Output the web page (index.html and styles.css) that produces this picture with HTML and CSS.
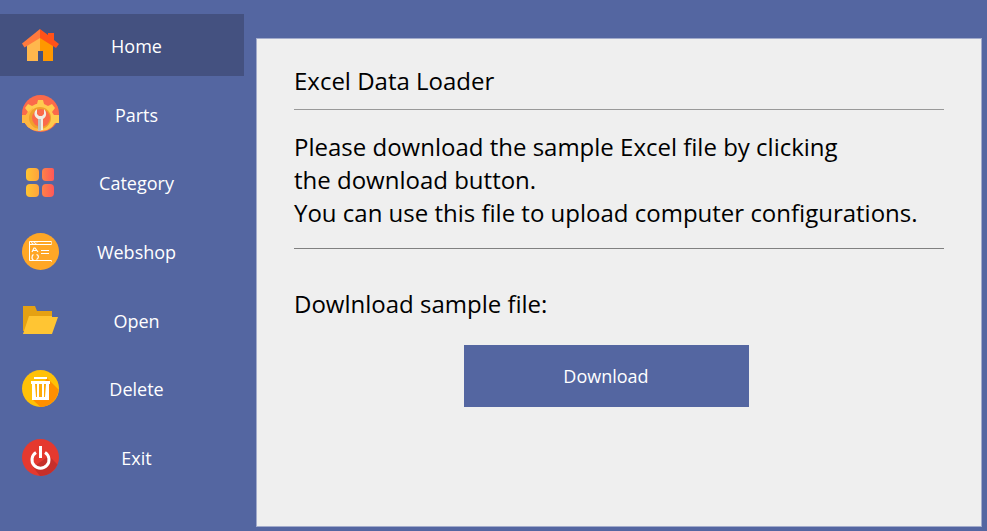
FILE: index.html
```
<!DOCTYPE html>
<html lang="en">
<head>
<meta charset="utf-8">
<title>Excel Data Loader</title>
<link rel="stylesheet" href="styles.css">
</head>
<body>
<nav class="sidebar">
  <button class="nav-item active">
    <svg class="icon" viewBox="0 0 38 38" aria-hidden="true">
      <path fill="#ffb74d" d="M6 18 19 9V35H6z"/>
      <path fill="#ff9800" d="M19 9 32 18V35H19z"/>
      <path fill="#445180" d="M17 25h5v10h-5z"/>
      <path fill="#ff7a3d" d="M19 3 1 17.500l2.500 4L19 12z"/>
      <path fill="#ff5219" d="M19 3l8 6V7h6v7l5 4-3 4L19 12z"/>
    </svg>
    <span>Home</span>
  </button>
  <button class="nav-item">
    <svg class="icon" viewBox="0 0 38 38" aria-hidden="true">
      <circle cx="19.500" cy="18.500" r="18.500" fill="#fb6a4a"/>
      <path fill="#ffcb4f" d="M16 9l1-4h5l1 4 4 2 4-2 3 4-3 4 2 3h5v8h-4l-3 4-5 3-6 1h-2l-6-1-5-3-3-4H1v-8h4l2-3-3-4 3-4 4 2 4-2z"/>
      <path fill="#ffb640" d="M1 20h4l2-3 5-4-1 16 7 7-6-1-5-3-3-4H1z"/>
      <circle cx="19" cy="23" r="11" fill="#f0a02c"/>
      <circle cx="20" cy="23" r="9" fill="#fb6a4a"/>
      <path fill="#f0ede2" d="M16 14c-4 3-3 8 1 10v11h5V24c4-2 4-7 1-10v5l-2 2h-3l-2-2z"/>
      <path fill="#bfc2bf" d="M17 24h3v12h-3z"/>
    </svg>
    <span>Parts</span>
  </button>
  <button class="nav-item">
    <svg class="icon" viewBox="0 0 38 38" aria-hidden="true">
      <defs>
        <linearGradient id="warm"><stop stop-color="#ffc531"/><stop offset="1" stop-color="#ffa33c"/></linearGradient>
        <linearGradient id="hot"><stop stop-color="#ff8247"/><stop offset="1" stop-color="#ff5759"/></linearGradient>
      </defs>
      <rect x="5" y="5" width="13" height="13" rx="4" fill="url(#warm)"/>
      <rect x="5" y="21" width="13" height="13" rx="4" fill="url(#warm)"/>
      <path fill="url(#hot)" d="M25 5h6a2 2 0 0 1 2 2v9a2 2 0 0 1-2 2h-6a4 4 0 0 1-4-4V9a4 4 0 0 1 4-4z"/>
      <rect x="21" y="21" width="12" height="13" rx="4" fill="url(#hot)"/>
    </svg>
    <span>Category</span>
  </button>
  <button class="nav-item">
    <svg class="icon" viewBox="0 0 38 38" aria-hidden="true">
      <circle cx="19.500" cy="19.500" r="18.500" fill="#ffa726"/>
      <g fill="none" stroke="#fff">
        <path d="M30 9.500H8.500v19H30M9 12.500h21"/>
        <path d="M10 10.500l2 1 1-1 2 1 1-1" />
        <path d="M30.500 9v4M30.500 28v2" opacity=".6"/>
        <path d="M11 20l2-4h1l3 4M12 18.500h4M12.500 22.500c-2 1-2 5 0 5M15.500 22.500c3 1 2 4 0 5" stroke-width="1.200"/>
        <path d="M20 18.500h8M20 21.500h8" stroke-width="1.200"/>
      </g>
    </svg>
    <span>Webshop</span>
  </button>
  <button class="nav-item">
    <svg class="icon" viewBox="0 0 38 38" aria-hidden="true">
      <path fill="#e5a113" d="M2 5h12l2 5h15v20H2z"/>
      <path fill="#ffc533" d="M8 15h23v1h6l-6 17H2z"/>
    </svg>
    <span>Open</span>
  </button>
  <button class="nav-item">
    <svg class="icon" viewBox="0 0 38 38" aria-hidden="true">
      <circle cx="19.500" cy="19.500" r="18.500" fill="#ffc107"/>
      <path fill="#ff8f00" d="M26 9l11.500 11.500A18.500 18.500 0 0 1 19.500 38l-7.500-7z"/>
      <path fill="#fff" d="M13 8h13v2H13zM10 12h19v3h-1v16H11V15h-1z"/>
      <path fill="#ffab08" d="M14 15h2v13h-1zM18 15h3v13h-3zM23 15h2l-1 13h-1z"/>
    </svg>
    <span>Delete</span>
  </button>
  <button class="nav-item">
    <svg class="icon" viewBox="0 0 38 38" aria-hidden="true">
      <circle cx="19.500" cy="19.500" r="18.500" fill="#e5392f"/>
      <path fill="#c62f2a" d="M28 18l8.500 8.500A18.500 18.500 0 0 1 19 38l-7-9z"/>
      <path fill="none" stroke="#fff" stroke-width="3" d="M15 14.500a8.500 8.500 0 1 0 9 0M19.500 8v12"/>
    </svg>
    <span>Exit</span>
  </button>
</nav>
<main class="panel">
  <h1 class="title">Excel Data Loader</h1>
  <p class="intro">Please download the sample Excel file by clicking<br>the download button.<br>You can use this file to upload computer configurations.</p>
  <p class="prompt">Dowlnload sample file:</p>
  <button class="download">Download</button>
</main>
</body>
</html>
```
FILE: styles.css
```
* {
  box-sizing: border-box;
}

body {
  margin: 0;
  min-height: 100vh;
  display: grid;
  grid-template-columns: 244px 1fr;
  column-gap: 12px;
  background: #5466a1;
  font-family: "Open Sans", "Noto Sans", sans-serif;
}

button {
  border: 0;
  font: inherit;
  font-size: 18px;
  color: #fff;
  cursor: pointer;
}

.sidebar {
  display: flex;
  flex-direction: column;
  gap: 7px;
  padding: 14px 0 43px;
}

.nav-item {
  flex: 1;
  display: grid;
  grid-template-columns: 38px 1fr;
  align-items: center;
  padding: 0 48px 0 21px;
  background: transparent;
}

.nav-item.active {
  background: #445180;
}

.nav-item span {
  padding: 2px 0 0 18px;
  text-align: center;
}

.icon {
  width: 38px;
  height: 38px;
}

.panel {
  display: flex;
  flex-direction: column;
  margin: 38px 5px 4px 0;
  padding: 24px 37px;
  border: 1px solid #a2abcb;
  background: #efefef;
  color: #000;
  font-size: 24px;
  line-height: 33px;
}

.title {
  margin: 0;
  padding: 1px 0 12px;
  border-bottom: 1px solid #999;
  font-size: 24px;
  font-weight: 400;
}

.intro {
  margin: 0;
  padding: 20px 0 19px;
  border-bottom: 1px solid #808080;
}

.prompt {
  margin: 38px 0 25px;
}

.download {
  align-self: center;
  width: 285px;
  height: 62px;
  margin-right: 26px;
  background: #5466a1;
}
```
